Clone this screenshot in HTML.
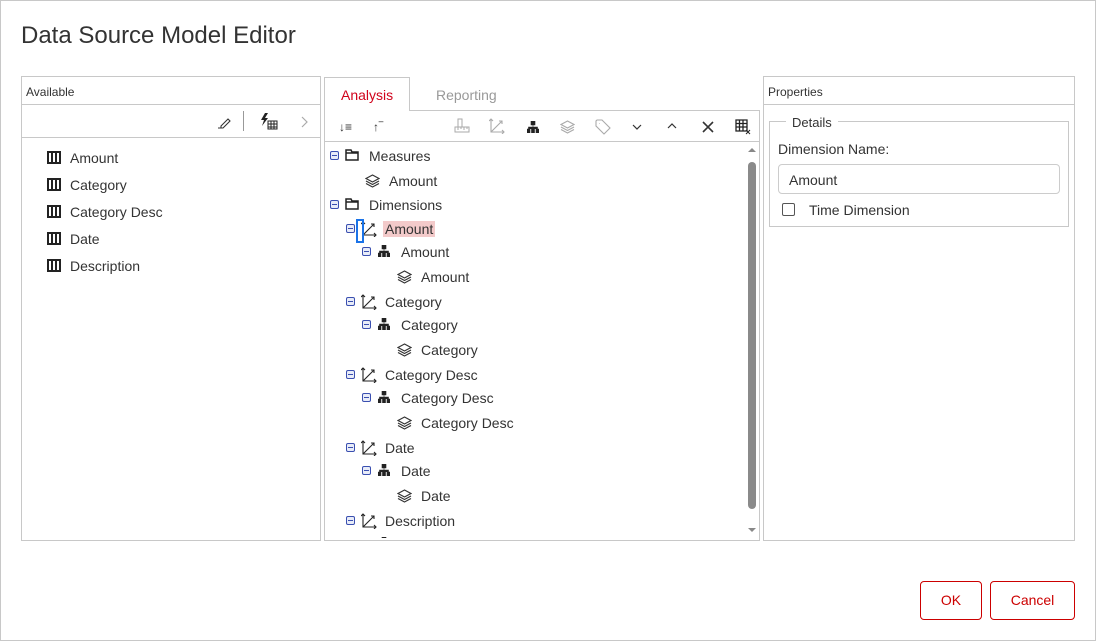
<!DOCTYPE html>
<html><head><meta charset="utf-8"><style>
*{box-sizing:border-box;margin:0;padding:0}
html,body{width:1096px;height:641px;overflow:hidden}
body{position:relative;background:#fff;font-family:"Liberation Sans",sans-serif;color:#333}
.a{position:absolute}
.frame{left:0;top:0;width:1096px;height:641px;border:1px solid #c8c8c8}
.box{border:1px solid #c8c8c8}
.t{position:absolute;font-size:14px;white-space:nowrap;line-height:16px}
.hl{background:#f3caca;padding:0 2px;margin-left:-2px}
svg{position:absolute}
.mn{position:absolute;width:9px;height:9px;border:1px solid #3a4fb0;border-radius:2px;background:#e8ecf8}
.mn:after{content:"";position:absolute;left:1px;top:3px;width:5px;height:1px;background:#3a4fb0}
.btn{position:absolute;border:1px solid #c00;border-radius:4px;color:#c00;font-size:14px;text-align:center;line-height:37px}
</style></head><body>
<div class="a frame"></div>
<div class="t" style="left:21px;top:22px;font-size:24px;line-height:28px;color:#333">Data Source Model Editor</div>

<!-- left -->
<div class="a box" style="left:21px;top:76px;width:300px;height:465px"></div>
<div class="a" style="left:22px;top:104px;width:298px;height:1px;background:#c8c8c8"></div>
<div class="a" style="left:22px;top:137px;width:298px;height:1px;background:#c8c8c8"></div>
<div class="t" style="left:26px;top:84px;font-size:12px">Available</div>
<svg style="left:216px;top:114px" width="16" height="16" viewBox="0 0 16 16"><path d="M2 14h5M5 12l7-7 2 2-7 7H5z" fill="none" stroke="#333" stroke-width="1.1"/></svg>
<div class="a" style="left:243px;top:111px;width:1px;height:20px;background:#999"></div>
<svg style="left:260px;top:112px" width="18" height="18" viewBox="0 0 18 18"><path d="M5 1L1 8h3l-2 6 6-8H5l3-5z" fill="#222"/><path d="M8 9h9v8H8zM8 12h9M8 15h9M11 9v8M14 9v8" fill="none" stroke="#222" stroke-width="1"/></svg>
<svg style="left:300px;top:116px" width="8" height="12" viewBox="0 0 8 12"><path d="M2 1l5 5-5 5" fill="none" stroke="#aaa" stroke-width="1.2"/></svg>

<!-- middle -->
<div class="a box" style="left:324px;top:110px;width:436px;height:431px"></div>
<div class="a" style="left:324px;top:77px;width:86px;height:34px;border:1px solid #c8c8c8;border-bottom:none;background:#fff"></div>
<div class="t" style="left:341px;top:87px;color:#d0021b">Analysis</div>
<div class="t" style="left:436px;top:87px;color:#999">Reporting</div>
<div class="a" style="left:325px;top:141px;width:434px;height:1px;background:#c8c8c8"></div>
<div class="t" style="left:339px;top:119px;font-size:12px">↓≡</div>
<div class="t" style="left:373px;top:119px;font-size:12px">↑‾</div>
<svg style="left:454px;top:118px" width="16" height="16" viewBox="0 0 16 16"><path d="M4 1h4v8H4zM1 9h14v5H1zM4 9v3M7 9v2M10 9v3M13 9v2" fill="none" stroke="#aaa" stroke-width="1"/></svg>
<svg style="left:489px;top:118px" width="16" height="16" viewBox="0 0 16 16"><path d="M2 1v13h13M2 14L13 3M10 3h3v3M13 12l2 2-2 2M0 3l2-2 2 2" fill="none" stroke="#aaa" stroke-width="1.1"/></svg>
<svg style="left:527px;top:121px" width="12" height="12" viewBox="0 0 12 12"><path d="M4 0h4v4H4zM0 8h3v4H0zM4.5 8h3v4h-3zM9 8h3v4H9zM6 4v2M1.5 8V6h9v2" fill="#222" stroke="#222" stroke-width=".6"/></svg>
<svg style="left:560px;top:120px" width="15" height="14" viewBox="0 0 15 14"><path d="M7.5 1L14 4.5 7.5 8 1 4.5zM1 7l6.5 3.5L14 7M1 9.5l6.5 3.5 6.5-3.5" fill="none" stroke="#aaa" stroke-width="1.1"/></svg>
<svg style="left:595px;top:119px" width="16" height="16" viewBox="0 0 16 16"><path d="M1 2v5l8 8 6-6-8-8H2zM4 4.5h.5" fill="none" stroke="#aaa" stroke-width="1.1"/></svg>
<svg style="left:632px;top:124px" width="10" height="6" viewBox="0 0 10 6"><path d="M1 1l4 4 4-4" fill="none" stroke="#333" stroke-width="1.2"/></svg>
<svg style="left:667px;top:123px" width="10" height="6" viewBox="0 0 10 6"><path d="M1 5l4-4 4 4" fill="none" stroke="#333" stroke-width="1.2"/></svg>
<svg style="left:702px;top:121px" width="12" height="12" viewBox="0 0 12 12"><path d="M1 1l10 10M11 1L1 11" stroke="#333" stroke-width="1.6"/></svg>
<svg style="left:735px;top:119px" width="16" height="16" viewBox="0 0 16 16"><path d="M1 1h11v11H1zM1 4.5h11M1 8h11M4.5 1v11M8 1v11" fill="none" stroke="#222" stroke-width="1.3"/><path d="M11 11l4 4M15 11l-4 4" stroke="#222" stroke-width="1"/></svg>
<!-- scrollbar -->
<svg style="left:747px;top:147px" width="10" height="6" viewBox="0 0 10 6"><path d="M1 5l4-4 4 4z" fill="#888"/></svg>
<div class="a" style="left:748px;top:162px;width:8px;height:347px;background:#8a8a8a;border-radius:4px"></div>
<svg style="left:747px;top:527px" width="10" height="6" viewBox="0 0 10 6"><path d="M1 1l4 4 4-4z" fill="#888"/></svg>

<div class="a" style="left:325px;top:142px;width:420px;height:396px;overflow:hidden">
<div class="a" style="left:-325px;top:-142px;width:1096px;height:641px">
<div class="mn" style="left:330px;top:151px"></div>
<svg style="left:345px;top:149px" width="14" height="12" viewBox="0 0 14 12"><path d="M1 1h5l1 2h6v8H1zM1 4h12" fill="none" stroke="#222" stroke-width="1.5"/></svg>
<div class="t" style="left:369px;top:148px">Measures</div>
<svg style="left:365px;top:174px" width="15" height="14" viewBox="0 0 15 14"><path d="M7.5 1L14 4.5 7.5 8 1 4.5zM1 7l6.5 3.5L14 7M1 9.5l6.5 3.5 6.5-3.5" fill="none" stroke="#333" stroke-width="1.2"/></svg>
<div class="t" style="left:389px;top:173px">Amount</div>
<div class="mn" style="left:330px;top:200px"></div>
<svg style="left:345px;top:198px" width="14" height="12" viewBox="0 0 14 12"><path d="M1 1h5l1 2h6v8H1zM1 4h12" fill="none" stroke="#222" stroke-width="1.5"/></svg>
<div class="t" style="left:369px;top:197px">Dimensions</div>

<div class="mn" style="left:346px;top:224px"></div><svg style="left:361px;top:221px" width="16" height="16" viewBox="0 0 16 16"><path d="M2 1v13h13M2 14L13 3M10 3h3v3M13 12l2 2-2 2M0 3l2-2 2 2" fill="none" stroke="#222" stroke-width="1.1"/></svg>
<div class="t" style="left:385px;top:221px"><span class="hl">Amount</span></div>
<div class="a" style="left:356px;top:219px;width:8px;height:24px;border:2px solid #1a73e8"></div>
<div class="mn" style="left:362px;top:247px"></div><svg style="left:378px;top:245px" width="12" height="12" viewBox="0 0 12 12"><path d="M4 0h4v4H4zM0 8h3v4H0zM4.5 8h3v4h-3zM9 8h3v4H9zM6 4v2M1.5 8V6h9v2" fill="#222" stroke="#222" stroke-width=".6"/></svg>
<div class="t" style="left:401px;top:244px">Amount</div>
<svg style="left:397px;top:270px" width="15" height="14" viewBox="0 0 15 14"><path d="M7.5 1L14 4.5 7.5 8 1 4.5zM1 7l6.5 3.5L14 7M1 9.5l6.5 3.5 6.5-3.5" fill="none" stroke="#333" stroke-width="1.2"/></svg>
<div class="t" style="left:421px;top:269px">Amount</div>

<div class="mn" style="left:346px;top:297px"></div><svg style="left:361px;top:294px" width="16" height="16" viewBox="0 0 16 16"><path d="M2 1v13h13M2 14L13 3M10 3h3v3M13 12l2 2-2 2M0 3l2-2 2 2" fill="none" stroke="#222" stroke-width="1.1"/></svg>
<div class="t" style="left:385px;top:294px">Category</div>
<div class="mn" style="left:362px;top:320px"></div><svg style="left:378px;top:318px" width="12" height="12" viewBox="0 0 12 12"><path d="M4 0h4v4H4zM0 8h3v4H0zM4.5 8h3v4h-3zM9 8h3v4H9zM6 4v2M1.5 8V6h9v2" fill="#222" stroke="#222" stroke-width=".6"/></svg>
<div class="t" style="left:401px;top:317px">Category</div>
<svg style="left:397px;top:343px" width="15" height="14" viewBox="0 0 15 14"><path d="M7.5 1L14 4.5 7.5 8 1 4.5zM1 7l6.5 3.5L14 7M1 9.5l6.5 3.5 6.5-3.5" fill="none" stroke="#333" stroke-width="1.2"/></svg>
<div class="t" style="left:421px;top:342px">Category</div>

<div class="mn" style="left:346px;top:370px"></div><svg style="left:361px;top:367px" width="16" height="16" viewBox="0 0 16 16"><path d="M2 1v13h13M2 14L13 3M10 3h3v3M13 12l2 2-2 2M0 3l2-2 2 2" fill="none" stroke="#222" stroke-width="1.1"/></svg>
<div class="t" style="left:385px;top:367px">Category Desc</div>
<div class="mn" style="left:362px;top:393px"></div><svg style="left:378px;top:391px" width="12" height="12" viewBox="0 0 12 12"><path d="M4 0h4v4H4zM0 8h3v4H0zM4.5 8h3v4h-3zM9 8h3v4H9zM6 4v2M1.5 8V6h9v2" fill="#222" stroke="#222" stroke-width=".6"/></svg>
<div class="t" style="left:401px;top:390px">Category Desc</div>
<svg style="left:397px;top:416px" width="15" height="14" viewBox="0 0 15 14"><path d="M7.5 1L14 4.5 7.5 8 1 4.5zM1 7l6.5 3.5L14 7M1 9.5l6.5 3.5 6.5-3.5" fill="none" stroke="#333" stroke-width="1.2"/></svg>
<div class="t" style="left:421px;top:415px">Category Desc</div>

<div class="mn" style="left:346px;top:443px"></div><svg style="left:361px;top:440px" width="16" height="16" viewBox="0 0 16 16"><path d="M2 1v13h13M2 14L13 3M10 3h3v3M13 12l2 2-2 2M0 3l2-2 2 2" fill="none" stroke="#222" stroke-width="1.1"/></svg>
<div class="t" style="left:385px;top:440px">Date</div>
<div class="mn" style="left:362px;top:466px"></div><svg style="left:378px;top:464px" width="12" height="12" viewBox="0 0 12 12"><path d="M4 0h4v4H4zM0 8h3v4H0zM4.5 8h3v4h-3zM9 8h3v4H9zM6 4v2M1.5 8V6h9v2" fill="#222" stroke="#222" stroke-width=".6"/></svg>
<div class="t" style="left:401px;top:463px">Date</div>
<svg style="left:397px;top:489px" width="15" height="14" viewBox="0 0 15 14"><path d="M7.5 1L14 4.5 7.5 8 1 4.5zM1 7l6.5 3.5L14 7M1 9.5l6.5 3.5 6.5-3.5" fill="none" stroke="#333" stroke-width="1.2"/></svg>
<div class="t" style="left:421px;top:488px">Date</div>

<div class="mn" style="left:346px;top:516px"></div><svg style="left:361px;top:513px" width="16" height="16" viewBox="0 0 16 16"><path d="M2 1v13h13M2 14L13 3M10 3h3v3M13 12l2 2-2 2M0 3l2-2 2 2" fill="none" stroke="#222" stroke-width="1.1"/></svg>
<div class="t" style="left:385px;top:513px">Description</div>
<div class="mn" style="left:362px;top:539px"></div><svg style="left:378px;top:537px" width="12" height="12" viewBox="0 0 12 12"><path d="M4 0h4v4H4zM0 8h3v4H0zM4.5 8h3v4h-3zM9 8h3v4H9zM6 4v2M1.5 8V6h9v2" fill="#222" stroke="#222" stroke-width=".6"/></svg>
<div class="t" style="left:401px;top:536px">Description</div>
</div></div>

<!-- left items -->
<svg style="left:47px;top:151px" width="14" height="13" viewBox="0 0 14 13"><path d="M0 0h14v13H0z" fill="#222"/><path d="M2 2h2v9H2zM6 2h2v9H6zM10 2h2v9h-2z" fill="#fff"/></svg>
<div class="t" style="left:70px;top:150px">Amount</div>
<svg style="left:47px;top:178px" width="14" height="13" viewBox="0 0 14 13"><path d="M0 0h14v13H0z" fill="#222"/><path d="M2 2h2v9H2zM6 2h2v9H6zM10 2h2v9h-2z" fill="#fff"/></svg>
<div class="t" style="left:70px;top:177px">Category</div>
<svg style="left:47px;top:205px" width="14" height="13" viewBox="0 0 14 13"><path d="M0 0h14v13H0z" fill="#222"/><path d="M2 2h2v9H2zM6 2h2v9H6zM10 2h2v9h-2z" fill="#fff"/></svg>
<div class="t" style="left:70px;top:204px">Category Desc</div>
<svg style="left:47px;top:232px" width="14" height="13" viewBox="0 0 14 13"><path d="M0 0h14v13H0z" fill="#222"/><path d="M2 2h2v9H2zM6 2h2v9H6zM10 2h2v9h-2z" fill="#fff"/></svg>
<div class="t" style="left:70px;top:231px">Date</div>
<svg style="left:47px;top:259px" width="14" height="13" viewBox="0 0 14 13"><path d="M0 0h14v13H0z" fill="#222"/><path d="M2 2h2v9H2zM6 2h2v9H6zM10 2h2v9h-2z" fill="#fff"/></svg>
<div class="t" style="left:70px;top:258px">Description</div>

<!-- right -->
<div class="a box" style="left:763px;top:76px;width:312px;height:465px"></div>
<div class="a" style="left:764px;top:104px;width:310px;height:1px;background:#c8c8c8"></div>
<div class="t" style="left:768px;top:84px;font-size:12px">Properties</div>
<div class="a box" style="left:769px;top:121px;width:300px;height:106px"></div>
<div class="t" style="left:786px;top:115px;font-size:13px;background:#fff;padding:0 6px">Details</div>
<div class="t" style="left:778px;top:141px">Dimension Name:</div>
<div class="a" style="left:778px;top:164px;width:282px;height:30px;border:1px solid #ccc;border-radius:4px"></div>
<div class="t" style="left:789px;top:172px">Amount</div>
<div class="a" style="left:782px;top:203px;width:13px;height:13px;border:1px solid #555;border-radius:2px"></div>
<div class="t" style="left:809px;top:202px">Time Dimension</div>

<div class="btn" style="left:920px;top:581px;width:62px;height:39px">OK</div>
<div class="btn" style="left:990px;top:581px;width:85px;height:39px">Cancel</div>
</body></html>
